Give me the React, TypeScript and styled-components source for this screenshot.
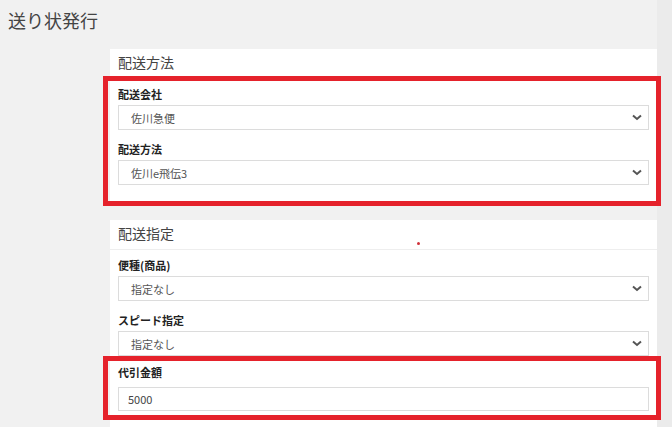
import React from "react";
import styled, { createGlobalStyle } from "styled-components";

const GlobalStyle = createGlobalStyle`
  html, body { margin: 0; padding: 0; }
  body {
    background: #f1f1f1;
    font-family: "Noto Sans CJK JP", "Noto Sans", sans-serif;
    color: #333;
  }
`;

const Page = styled.div`
  display: grid;
  grid-template-columns: 657px 1fr;
  min-height: 427px;
  overflow: hidden;
`;

const Main = styled.main`
  padding: 8px 0 0 8px;
`;

const SideStrip = styled.div`
  background: #ebebeb;
`;

const Title = styled.h1`
  margin: 0 0 17px;
  font-size: 18px;
  line-height: 24px;
  font-weight: 400;
  color: #444;
`;

const Cards = styled.div`
  margin-left: 102px;
  display: flex;
  flex-direction: column;
  gap: 16px;
`;

const Card = styled.section`
  background: #fff;
`;

const CardHeader = styled.header`
  position: relative;
  height: 30px;
  box-sizing: border-box;
  padding: 0 8px 3px;
  display: flex;
  align-items: center;
  border-bottom: 1px solid #eeeeee;
  font-size: 14px;
  line-height: 18px;
  color: #444;
`;

const Dot = styled.span`
  position: absolute;
  left: 307px;
  top: 22px;
  width: 3px;
  height: 3px;
  border-radius: 50%;
  background: #d0313a;
`;

const CardBody = styled.div<{ $pb: number }>`
  position: relative;
  padding: 7px 8px ${(p) => p.$pb}px;
`;

const Field = styled.div<{ $mt?: number }>`
  position: relative;
  display: flex;
  flex-direction: column;
  margin-top: ${(p) => p.$mt ?? 0}px;
`;

const Label = styled.label<{ $gap?: number }>`
  display: block;
  font-size: 11px;
  line-height: 16px;
  height: 16px;
  font-weight: 700;
  color: #222;
  margin-bottom: ${(p) => p.$gap ?? 3}px;
`;

const SelectWrap = styled.div`
  position: relative;
  height: 25px;
`;

const Select = styled.select`
  display: block;
  box-sizing: border-box;
  appearance: none;
  -webkit-appearance: none;
  width: 100%;
  height: 25px;
  margin: 0;
  border: 1px solid #dcdcdc;
  border-radius: 0;
  background: #fff;
  padding: 0 24px 0 12px;
  font-family: "Noto Sans CJK JP", "Noto Sans", sans-serif;
  font-size: 11px;
  color: #555;
  outline: none;
`;

const Chevron = styled.svg`
  position: absolute;
  right: 6px;
  top: 9px;
  pointer-events: none;
`;

const TextInput = styled.input`
  display: block;
  box-sizing: border-box;
  width: 100%;
  height: 24px;
  margin: 0;
  border: 1px solid #dcdcdc;
  border-radius: 0;
  padding: 0 9px;
  font-family: "Noto Sans CJK JP", "Noto Sans", sans-serif;
  font-size: 11px;
  color: #444;
  outline: none;
`;

const Highlight = styled.div<{ $t: number; $r: number; $b: number; $l: number }>`
  position: absolute;
  top: ${(p) => p.$t}px;
  right: ${(p) => p.$r}px;
  bottom: ${(p) => p.$b}px;
  left: ${(p) => p.$l}px;
  border: 5px solid #e5222b;
  pointer-events: none;
`;

function SelectField({ label, value, mt }: { label: string; value: string; mt?: number }) {
  return (
    <Field $mt={mt}>
      <Label>{label}</Label>
      <SelectWrap>
        <Select defaultValue={value}>
          <option value={value}>{value}</option>
        </Select>
        <Chevron width="12" height="7" viewBox="0 0 12 7">
          <polyline points="2,1.5 6,5 10,1.5" fill="none" stroke="#555" strokeWidth="2" />
        </Chevron>
      </SelectWrap>
    </Field>
  );
}

export default function App() {
  return (
    <>
      <GlobalStyle />
      <Page>
        <Main>
          <Title>送り状発行</Title>
          <Cards>
            <Card>
              <CardHeader>配送方法</CardHeader>
              <CardBody $pb={19}>
                <SelectField label="配送会社" value="佐川急便" />
                <SelectField label="配送方法" value="佐川e飛伝3" mt={11} />
                <Highlight $t={-3} $r={-4} $b={-2} $l={-7} />
              </CardBody>
            </Card>
            <Card>
              <CardHeader>
                配送指定
                <Dot />
              </CardHeader>
              <CardBody $pb={20}>
                <SelectField label="便種(商品)" value="指定なし" />
                <SelectField label="スピード指定" value="指定なし" mt={11} />
                <Field $mt={8}>
                  <Label $gap={7}>代引金額</Label>
                  <TextInput defaultValue="5000" />
                  <Highlight $t={-8} $r={-12} $b={-9} $l={-15} />
                </Field>
              </CardBody>
            </Card>
          </Cards>
        </Main>
        <SideStrip />
      </Page>
    </>
  );
}
